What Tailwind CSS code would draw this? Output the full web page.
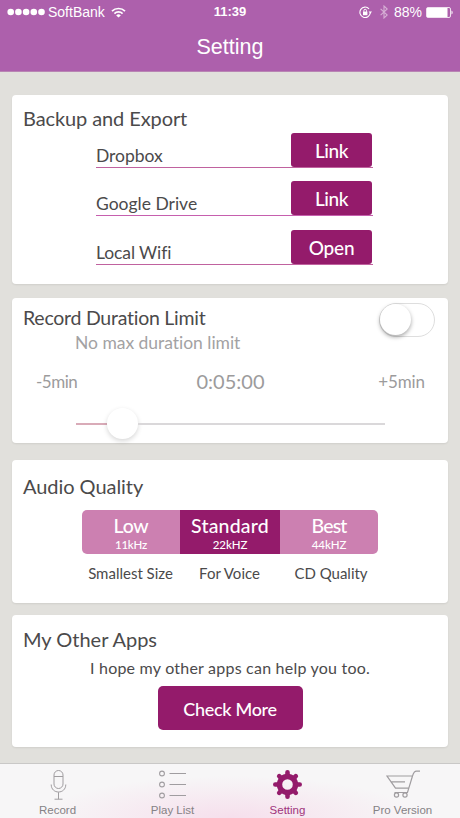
<!DOCTYPE html>
<html lang="en">
<head>
  <meta charset="UTF-8">
  <meta name="viewport" content="width=device-width, initial-scale=1.0">
  <title>Setting</title>
  <script src="https://cdn.jsdelivr.net/npm/@tailwindcss/browser@4"></script>
</head>
<body class="bg-[#e1e0dc] font-['Lato',sans-serif] text-[#4b4a4b]">
  <div class="w-[460px] h-[818px] flex flex-col overflow-hidden">

    <!-- Status bar and title -->
    <header class="h-[72px] shrink-0 bg-[#ad60ac] border-b border-[#b985b4] text-white font-['Liberation_Sans',sans-serif]">
      <div class="h-6 grid grid-cols-3 items-center text-[14px] leading-6">
        <div class="flex items-center pl-[7px]">
          <svg class="w-[39px] h-2" viewBox="0 0 39 8" fill="white">
            <circle cx="3.7" cy="4" r="3.3"/><circle cx="11.4" cy="4" r="3.3"/><circle cx="19.1" cy="4" r="3.3"/><circle cx="26.8" cy="4" r="3.3"/><circle cx="34.5" cy="4" r="3.3"/>
          </svg>
          <span class="ml-[2px]">SoftBank</span>
          <svg class="ml-[6px] w-[15px] h-[11px]" viewBox="0 0 15 11" fill="none" stroke="white" stroke-width="1.7">
            <path d="M1 4.2a9.2 9.2 0 0 1 13 0"/>
            <path d="M3.4 6.6a5.8 5.8 0 0 1 8.2 0"/>
            <path d="M7.5 10.6 5.2 8.4a3.3 3.3 0 0 1 4.6 0z" fill="white" stroke="none"/>
          </svg>
        </div>
        <div class="text-center font-bold text-[13px]">11:39</div>
        <div class="flex items-center justify-end pr-[7px]">
          <svg class="w-[13px] h-[13px]" viewBox="0 0 13 13" fill="none" stroke="white">
            <path d="M11.3 6.8A5.2 5.2 0 1 1 10 2.8" stroke-width="1.1"/>
            <path d="M9.6 5.4h3.4l-1.7 2.3z" fill="white" stroke="none"/>
            <rect x="4" y="5.6" width="4.4" height="3.6" fill="white" stroke="none"/>
            <path d="M4.9 5.8V4.6a1.3 1.3 0 0 1 2.6 0v1.2"/>
          </svg>
          <svg class="ml-[8px] w-[8px] h-[14px]" viewBox="0 0 8 14" fill="none" stroke="#d6afd5" stroke-width="1.1">
            <path d="M.6 3.8 7.2 10 4 13V1l3.2 3L.6 10.2"/>
          </svg>
          <span class="ml-[6px]">88%</span>
          <svg class="ml-[4px] w-[27px] h-[11px]" viewBox="0 0 27 11">
            <rect x=".5" y=".5" width="24" height="10" rx="1.5" fill="none" stroke="white" stroke-opacity=".8"/>
            <rect x="1" y="1" width="20.5" height="9" fill="white"/>
            <path d="M25.5 3.5c1.5.5 1.5 3.5 0 4z" fill="white"/>
          </svg>
        </div>
      </div>
      <h1 class="text-center text-[21.5px] leading-[46px]">Setting</h1>
    </header>

    <main class="px-3 pt-[23px] flex-1">
      <!-- Backup and Export -->
      <section class="h-[189px] rounded bg-white shadow-[0_1px_2px_rgba(0,0,0,0.08)] pt-[11px] pl-[11px]">
        <h2 class="text-[20px] leading-6 tracking-[-0.1px] whitespace-nowrap">Backup and Export</h2>
        <div class="ml-[73px] mt-[3px] w-[277px] h-[35px] flex justify-between border-b border-[#c0629f]">
          <span class="text-[17.5px] leading-[45px] tracking-[-0.05px]">Dropbox</span>
          <button class="w-[81px] h-[34px] mr-[1px] rounded-[3px] bg-[#941b6b] text-white text-[19px] leading-[35px] tracking-[-0.4px] font-medium">Link</button>
        </div>
        <div class="ml-[73px] mt-[13px] w-[277px] h-[35px] flex justify-between border-b border-[#c65fae]">
          <span class="text-[17.5px] leading-[45px]">Google Drive</span>
          <button class="w-[81px] h-[34px] mr-[1px] rounded-[3px] bg-[#941b6b] text-white text-[19px] leading-[35px] tracking-[-0.4px] font-medium">Link</button>
        </div>
        <div class="ml-[73px] mt-[14px] w-[277px] h-[35px] flex justify-between border-b border-[#c0629f]">
          <span class="text-[17.5px] leading-[45px] tracking-[-0.1px]">Local Wifi</span>
          <button class="w-[81px] h-[34px] mr-[1px] rounded-[3px] bg-[#941b6b] text-white text-[19px] leading-[35px] tracking-[-0.2px] font-medium">Open</button>
        </div>
      </section>

      <!-- Record Duration Limit -->
      <section class="mt-[14px] h-[145px] rounded bg-white shadow-[0_1px_2px_rgba(0,0,0,0.08)] pl-[11px]">
        <div class="flex justify-between pr-[13px] h-[32px] pt-[5px]">
          <h2 class="text-[19.5px] leading-[30px] tracking-[-0.25px] whitespace-nowrap">Record Duration Limit</h2>
          <div class="w-[56px] h-[34px] shrink-0 rounded-full border-[1.5px] border-[#dedede]">
            <div class="w-[31px] h-[31px] rounded-full bg-white shadow-[0_2px_4px_rgba(0,0,0,0.35)]"></div>
          </div>
        </div>
        <p class="ml-[52px] text-[17.5px] leading-[25px] tracking-[-0.03px] text-[#a3a2a3]">No max duration limit</p>
        <div class="mt-[15px] ml-[13px] mr-[23px] grid grid-cols-3 items-center leading-6 text-[#9c9b9c]">
          <span class="text-[17px] tracking-[-0.5px]">-5min</span>
          <span class="text-[20px] leading-[22px] pb-[2px] text-center">0:05:00</span>
          <span class="text-[17px] tracking-[-0.1px] text-right">+5min</span>
        </div>
        <div class="mt-[14px] ml-[53px] w-[309px] h-[31px] flex items-center">
          <div class="w-[31px] h-[2px] bg-[#d9abb8]"></div>
          <div class="w-[31px] h-[31px] rounded-full bg-white shadow-[0_2px_5px_rgba(0,0,0,0.16)]"></div>
          <div class="flex-1 h-[2px] bg-[#dad8da]"></div>
        </div>
      </section>

      <!-- Audio Quality -->
      <section class="mt-[17px] h-[143px] rounded bg-white shadow-[0_1px_2px_rgba(0,0,0,0.08)] pt-[14px] pl-[11px]">
        <h2 class="text-[20px] leading-6 tracking-[-0.05px] whitespace-nowrap">Audio Quality</h2>
        <div class="ml-[59px] mt-[12px] w-[296px] h-[44px] grid grid-cols-[98px_100px_98px] rounded-[5px] overflow-hidden text-white text-center font-medium">
          <div class="bg-[#cc80b1] pt-[4px]">
            <div class="text-[19.5px] leading-[24px] tracking-[-0.3px]">Low</div>
            <div class="text-[11.5px] leading-[14px] tracking-[-0.2px]">11kHz</div>
          </div>
          <div class="bg-[#941b6b] pt-[4px]">
            <div class="text-[19.5px] leading-[24px] tracking-[0.2px]">Standard</div>
            <div class="text-[11.5px] leading-[14px] tracking-[-0.1px]">22kHZ</div>
          </div>
          <div class="bg-[#cc80b1] pt-[4px]">
            <div class="text-[19.5px] leading-[24px] tracking-[-0.8px]">Best</div>
            <div class="text-[11.5px] leading-[14px] tracking-[-0.1px]">44kHZ</div>
          </div>
        </div>
        <div class="ml-[59px] mt-[7px] w-[300px] grid grid-cols-[97px_101px_102px] text-center text-[15px] leading-6">
          <span>Smallest Size</span>
          <span>For Voice</span>
          <span>CD Quality</span>
        </div>
      </section>

      <!-- My Other Apps -->
      <section class="mt-[12px] h-[132px] rounded bg-white shadow-[0_1px_2px_rgba(0,0,0,0.08)] pt-[12px]">
        <h2 class="pl-[11px] text-[20px] leading-6 whitespace-nowrap">My Other Apps</h2>
        <p class="mt-[5px] text-center text-[16px] leading-6 tracking-[0.22px]">I hope my other apps can help you too.</p>
        <button class="block mx-auto mt-[6px] w-[145px] h-[44px] rounded-[5px] bg-[#941b6b] text-white text-[18px] leading-[46px] tracking-[-0.3px] font-medium">Check More</button>
      </section>
    </main>

    <!-- Tab bar -->
    <nav class="h-[55px] shrink-0 grid grid-cols-4 border-t border-[#c9c8c7] bg-[#f7f6f7] bg-[radial-gradient(ellipse_190px_42px_at_50%_100%,#f6dfec,#f7f6f7)] font-['Liberation_Sans',sans-serif] text-[11.5px] leading-4 text-[#858285]">
      <a class="flex flex-col items-center pt-[5px]">
        <svg class="w-8 h-8" viewBox="0 0 32 32" fill="none" stroke="#a09da0">
          <rect x="12" y="1.5" width="9" height="18" rx="4.5"/>
          <path d="M12 7.5h9M9.2 15.5c0 10 14.6 10 14.6 0M16.5 23.2v7M12.5 30.2h8"/>
        </svg>
        <span class="mt-px">Record</span>
      </a>
      <a class="flex flex-col items-center pt-[5px]">
        <svg class="w-8 h-8" viewBox="0 0 32 32" fill="none" stroke="#a09da0" stroke-width="1.1">
          <circle cx="5" cy="4.5" r="2.4"/><circle cx="5" cy="15.5" r="2.4"/><circle cx="5" cy="26.5" r="2.4"/>
          <path d="M12.5 4.5H29M12.5 15.5H29M12.5 26.5H29"/>
        </svg>
        <span class="mt-px">Play List</span>
      </a>
      <a class="flex flex-col items-center pt-[5px] text-[#a0347c]">
        <svg class="w-8 h-8" viewBox="0 0 32 32" fill="none" stroke="#941b6b">
          <circle cx="15.5" cy="15.5" r="8" stroke-width="5.4"/>
          <path d="M15.5 6V3.3M15.5 25v2.7M6 15.5H3.3M25 15.5h2.7M8.6 8.6 7.2 7.2M22.4 22.4l1.4 1.4M8.6 22.4l-1.4 1.4M22.4 8.6l1.4-1.4" stroke-width="4.6" stroke-linecap="round"/>
        </svg>
        <span class="mt-px">Setting</span>
      </a>
      <a class="flex flex-col items-center pt-[5px]">
        <svg class="w-9 h-8" viewBox="0 0 36 32" fill="none" stroke="#a09da0" stroke-width="1.2">
          <path d="M35 2.2h-3.5c-2 0-3 1.5-4 4.8H2l8.5 12.2h13.3L27.5 7M5.5 12.9h14.5M23.8 19.2l-1.3 4.3H9.5"/>
          <circle cx="11.5" cy="26" r="2.1"/><circle cx="20" cy="26" r="2.1"/>
        </svg>
        <span class="mt-px">Pro Version</span>
      </a>
    </nav>
  </div>
</body>
</html>
